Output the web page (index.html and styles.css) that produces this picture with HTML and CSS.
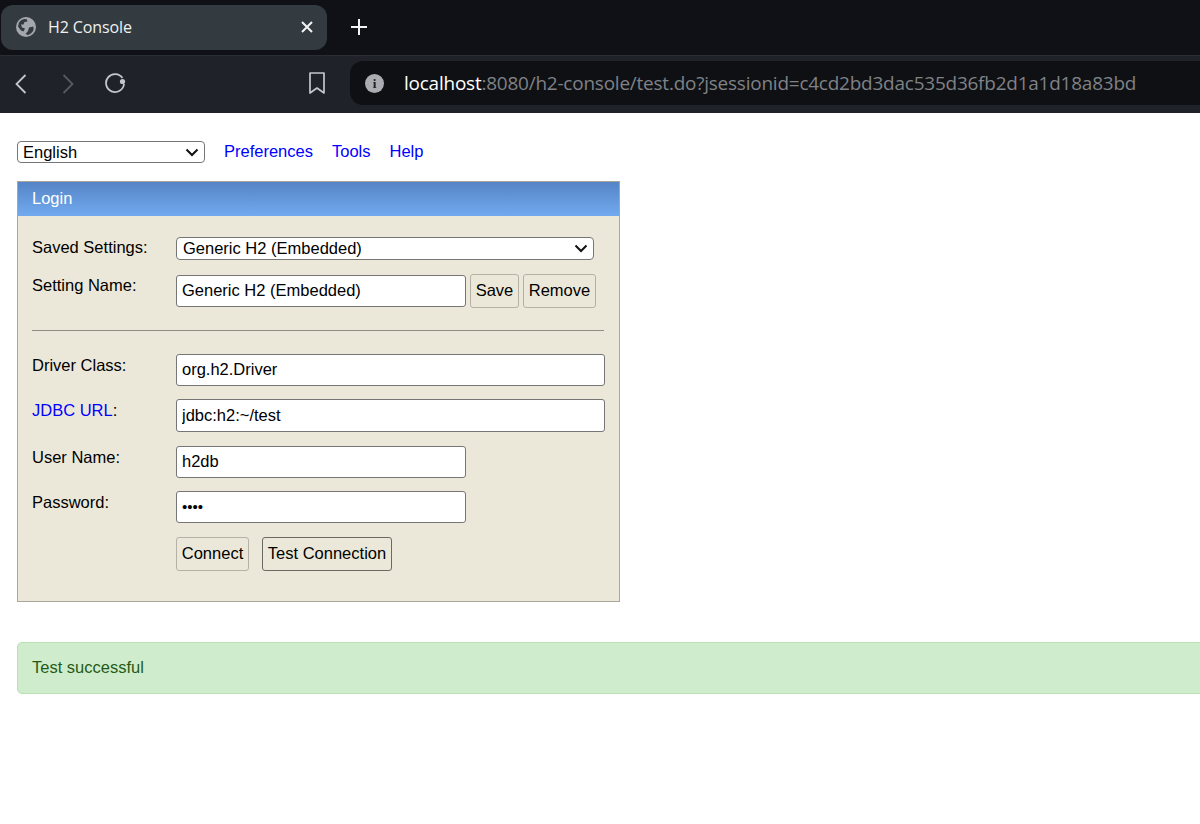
FILE: index.html
```html
<!DOCTYPE html>
<html lang="en">
<head>
<meta charset="utf-8">
<title>H2 Console</title>
<link rel="stylesheet" href="styles.css">
</head>
<body>
<header class="browser">
  <div class="tabstrip">
    <div class="tab">
      <svg class="globe" viewBox="0 0 20 20" width="20" height="20"><circle cx="10" cy="10" r="10" fill="#a4a8ad"/><path d="M3 5.500C5 2.500 8 1.500 10.500 2L11.500 4.500L8.500 5L7.500 7.500L5 7.500L6 10.500L9 11.500L7.500 14.500L5 13.500L2 9.500Z M13 10.500L17.500 9.500L17.500 13C16.500 15.500 14.500 17 12 18L9.500 17L12 14Z" fill="#343b40"/></svg>
      <span class="tab-title">H2 Console</span>
      <svg class="close" viewBox="0 0 12 12" width="12" height="12"><path d="M1 1L11 11M11 1L1 11" stroke="#f2f3f4" stroke-width="2"/></svg>
    </div>
    <svg class="newtab" viewBox="0 0 18 18" width="18" height="18"><path d="M9 1V17M1 9H17" stroke="#f2f3f4" stroke-width="2"/></svg>
  </div>
  <div class="toolbar">
    <svg class="nav-back" viewBox="0 0 12 20" width="12" height="20"><path d="M10.500 1L1.500 10L10.500 19" fill="none" stroke="#c2c7cc" stroke-width="1.800"/></svg>
    <svg class="nav-forward" viewBox="0 0 12 20" width="12" height="20"><path d="M1.500 1L10.500 10L1.500 19" fill="none" stroke="#565b60" stroke-width="1.800"/></svg>
    <svg class="nav-reload" viewBox="0 0 22 22" width="22" height="22"><path d="M18.500 6A9 9 0 1 0 20 12" fill="none" stroke="#c2c7cc" stroke-width="1.800"/><circle cx="18.500" cy="9.500" r="2.600" fill="#c2c7cc"/></svg>
    <svg class="bookmark" viewBox="0 0 16 22" width="16" height="22"><path d="M1 1H15V21L8 16L1 21Z" fill="none" stroke="#c2c7cc" stroke-width="1.700" stroke-linejoin="round"/></svg>
    <div class="addressbar">
      <span class="info">i</span>
      <span class="url"><span class="host">localhost</span>:8080/h2-console/test.do?jsessionid=c4cd2bd3dac535d36fb2d1a1d18a83bd</span>
    </div>
  </div>
</header>
<main class="page">
  <nav class="topnav">
    <select class="lang"><option>English</option></select>
    <a href="#">Preferences</a>
    <a href="#">Tools</a>
    <a href="#">Help</a>
  </nav>
  <form class="login">
    <div class="login-head">Login</div>
    <div class="login-body">
      <div class="row row-saved">
        <label>Saved Settings:</label>
        <select class="saved"><option>Generic H2 (Embedded)</option></select>
      </div>
      <div class="row row-name">
        <label>Setting Name:</label>
        <input class="short" type="text" value="Generic H2 (Embedded)">
        <button type="button" class="btn btn-save">Save</button>
        <button type="button" class="btn btn-remove">Remove</button>
      </div>
      <hr>
      <div class="row row-driver">
        <label>Driver Class:</label>
        <input class="long" type="text" value="org.h2.Driver">
      </div>
      <div class="row row-url">
        <label><a href="#">JDBC URL</a>:</label>
        <input class="long" type="text" value="jdbc:h2:~/test">
      </div>
      <div class="row row-user">
        <label>User Name:</label>
        <input class="short" type="text" value="h2db">
      </div>
      <div class="row row-pass">
        <label>Password:</label>
        <input class="short pass" type="password" value="h2db">
      </div>
      <div class="actions">
        <button type="button" class="btn btn-connect">Connect</button>
        <button type="button" class="btn btn-test">Test Connection</button>
      </div>
    </div>
  </form>
  <div class="alert">Test successful</div>
</main>
</body>
</html>
```
FILE: styles.css
```css
* { box-sizing: border-box; }
html, body { margin: 0; height: 824px; overflow: hidden; background: #fff; }
body { font-family: "Liberation Sans", Arial, sans-serif; font-size: 16.5px; color: #000; }

.browser { height: 113px; display: flex; flex-direction: column; font-family: "Open Sans", "Noto Sans", sans-serif; }
.tabstrip { height: 55px; background: #0f1116; display: flex; align-items: flex-start; padding: 5px 0 0 1px; }
.tab { width: 326px; height: 45px; background: #343b40; border-radius: 12px; display: flex; align-items: center; padding: 0 14px 2px 15px; color: #eef0f1; }
.globe { flex: none; }
.tab-title { font-size: 16px; margin-left: 12px; flex: 1; letter-spacing: -0.1px; }
.close { flex: none; }
.newtab { flex: none; margin: 13px 0 0 23px; }

.toolbar { height: 58px; background: #1f2329; border-top: 1px solid #2a2e34; display: flex; align-items: center; padding: 0 0 3px 15px; }
.nav-back { margin-top: 1px; }
.nav-forward { margin: 1px 0 0 35px; }
.nav-reload { margin-left: 30px; }
.bookmark { margin-left: 183px; }
.addressbar { margin-left: 25px; flex: 1; height: 44px; background: #0f1014; border-radius: 13px 0 0 13px; display: flex; align-items: center; padding-left: 15px; overflow: hidden; }
.info { width: 19px; height: 19px; border-radius: 50%; background: #a9acb1; color: #1a1c20; font: bold 13px/19px "Liberation Serif", serif; text-align: center; flex: none; }
.url { margin-left: 20px; font-size: 18.930px; color: #7f8286; white-space: nowrap; letter-spacing: -0.2px; }
.host { color: #fff; }

.page { padding: 28px 0 0 17px; }
a { color: #0000ff; text-decoration: none; }
.topnav { display: flex; align-items: center; height: 22px; }
.topnav a { margin-left: 19px; margin-top: -1px; }
select {
  font: inherit; color: #000; margin: 0; padding: 0 0 1px 5px;
  border: 1px solid #767676; border-radius: 4px;
  appearance: none;
  background: #fff url("data:image/svg+xml,%3Csvg xmlns='http://www.w3.org/2000/svg' width='14' height='9' viewBox='0 0 14 9'%3E%3Cpath d='M1.500 1.500L7 7L12.500 1.500' fill='none' stroke='%23111' stroke-width='2'/%3E%3C/svg%3E") no-repeat right 5px center;
}
.lang { width: 188px; height: 22px; }

.login { display: block; width: 603px; height: 421px; margin-top: 18px; border: 1px solid #aaa79a; background: #ece8d9; }
.login-head { height: 34px; padding-left: 14px; line-height: 32px; color: #fff; background: linear-gradient(#5584c6, #72aaef); }
.login-body { padding: 21px 14px 0; }
.row { display: flex; align-items: flex-start; }
.row label { width: 144px; flex: none; padding-top: 2px; }
input { font: inherit; color: #000; background: #fff; border: 1px solid #767676; border-radius: 3px; padding: 0 5px 1px; margin: 0; display: block; }
.short { width: 290px; }
.long { width: 429px; }
.saved { width: 418px; height: 23px; padding-left: 6px; }
.row-saved label { padding-top: 1px; }
.row-name { margin-top: 14px; }
.row-name input { height: 32px; margin-top: 1px; }
.btn { font: inherit; color: #000; background: #ece8d9; border: 1px solid #b5b2a5; border-radius: 3px; padding: 0 0 2px; height: 34px; margin: 0; white-space: nowrap; }
.btn-save { width: 49px; margin-left: 4px; }
.btn-remove { width: 73px; margin-left: 4px; }
hr { border: 0; border-top: 1px solid #8f8d84; margin: 22px 0 23px; height: 0; width: 572px; }
.row-driver input { height: 32px; }
.row-url { margin-top: 13px; }
.row-url input { height: 33px; }
.row-user { margin-top: 14px; }
.row-user input { height: 32px; }
.row-pass { margin-top: 13px; }
.row-pass input { height: 32px; }
.pass { font-size: 15px; }
.actions { display: flex; margin: 14px 0 0 144px; }
.btn-connect { width: 73px; }
.btn-test { width: 130px; margin-left: 13px; border-color: #6b6a62; }

.alert { margin-top: 40px; width: 1230px; height: 52px; padding-left: 14px; line-height: 48px; color: #255a16; background: #cfedcd; border: 1px solid #b9dfb7; border-radius: 5px; }
```
